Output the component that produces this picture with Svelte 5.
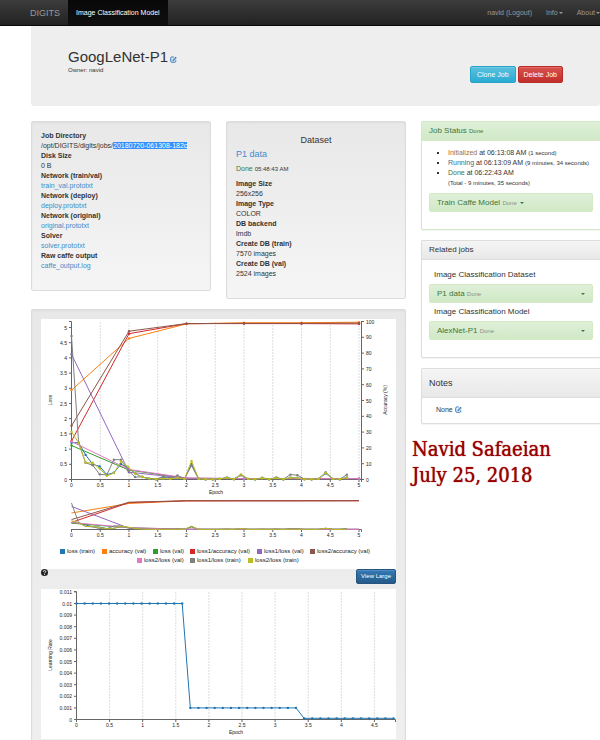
<script>
  const colors = {
    blue: '#1f77b4', orange: '#ff7f0e', green: '#2ca02c', red: '#d62728',
    purple: '#9467bd', brown: '#8c564b', pink: '#e377c2', gray: '#7f7f7f', olive: '#bcbd22'
  };

  const files = [
    ['Network (train/val)', 'train_val.prototxt'],
    ['Network (deploy)', 'deploy.prototxt'],
    ['Network (original)', 'original.prototxt'],
    ['Solver', 'solver.prototxt'],
    ['Raw caffe output', 'caffe_output.log']
  ];
  const dataset = [
    ['Image Size', '256x256'],
    ['Image Type', 'COLOR'],
    ['DB backend', 'lmdb'],
    ['Create DB (train)', '7570 images'],
    ['Create DB (val)', '2524 images']
  ];

  // Solver iterations are logged every STEP epochs, validation once an epoch.
  const STEP = 0.1228;
  const train = (values) => values.map((v, i) => [i * STEP, v]);
  const val = (values) => values.map((v, i) => [i, v]);
  const pct = (values) => val(values.map((v) => v * 0.0518));

  const series = [
    { color: colors.blue, points: train([1.21, 1.21, 0.81, 0.5, 0.43, 0.16, 0.22, 0.51, 0.38, 0.2, 0.08, 0.03, 0.01, 0.08, 0.06, 0.04, 0.03, 0.5, 0.03, 0.01, 0.01, 0.02, 0.06, 0.02, 0.15, 0.02, 0.01, 0.04, 0.01, 0.05, 0.01, 0.06, 0.05, 0.02, 0.01, 0.02, 0.2, 0.02, 0.01, 0.07]) },
    { color: colors.orange, points: pct([56.8, 89.6, 98.8, 99.6, 99.6, 99.9]) },
    { color: colors.green, points: val([1.12, 0.31, 0.04, 0.03, 0.03, 0.03]) },
    { color: colors.red, points: pct([24.4, 92.6, 99, 99, 99, 98.8]) },
    { color: colors.purple, points: val([4.12, 0.24, 0.04, 0.03, 0.03, 0.03]) },
    { color: colors.brown, points: pct([34.1, 94.2, 99, 99.1, 99.1, 99.3]) },
    { color: colors.pink, points: val([1.25, 0.33, 0.05, 0.03, 0.03, 0.03]) },
    { color: colors.gray, points: train([4.72, 1.21, 0.55, 0.47, 0.17, 0.15, 0.65, 0.65, 0.3, 0.08, 0.09, 0.03, 0.01, 0.1, 0.04, 0.13, 0.03, 0.46, 0.02, 0.01, 0.01, 0.02, 0.06, 0.01, 0.14, 0.02, 0.01, 0.06, 0.01, 0.07, 0.01, 0.16, 0.14, 0.01, 0.01, 0.02, 0.24, 0.02, 0.01, 0.16]) },
    { color: colors.olive, points: train([1.57, 1.21, 0.55, 0.55, 0.36, 0.12, 0.21, 0.59, 0.42, 0.2, 0.08, 0.03, 0.01, 0.03, 0.02, 0.05, 0.02, 0.61, 0.02, 0.01, 0.01, 0.02, 0.06, 0.01, 0.17, 0.02, 0.01, 0.04, 0.01, 0.05, 0.01, 0.06, 0.05, 0.01, 0.01, 0.02, 0.22, 0.02, 0.01, 0.06]) }
  ];

  const halves = [0, 0.5, 1, 1.5, 2, 2.5, 3, 3.5, 4, 4.5, 5];
  const percents = [0, 10, 20, 30, 40, 50, 60, 70, 80, 90, 100];
  const sx = (v) => 30.5 + v * 57.5;
  const sy = (v) => 160.5 - v * 30.4;
  const py = (v) => 160.5 - v * 1.58;
  const my = (v) => 210.5 - v * 5.6;
  const line = (points, fx, fy) => points.map(([x, y]) => `${fx(x).toFixed(1)},${fy(y).toFixed(1)}`).join(' ');

  const legend = [
    [19, 232, colors.blue, 'loss (train)'],
    [61, 232, colors.orange, 'accuracy (val)'],
    [112, 232, colors.green, 'loss (val)'],
    [149, 232, colors.red, 'loss1/accuracy (val)'],
    [216, 232, colors.purple, 'loss1/loss (val)'],
    [269, 232, colors.brown, 'loss2/accuracy (val)'],
    [96, 241, colors.pink, 'loss2/loss (val)'],
    [149, 241, colors.gray, 'loss1/loss (train)'],
    [207, 241, colors.olive, 'loss2/loss (train)']
  ];

  const rates = train(Array.from({ length: 40 }, (_, i) => (i < 14 ? 10 : i < 28 ? 1 : 0.1)));
  const rx = (v) => 35.5 + v * 66.2;
  const ry = (v) => 130.5 - v * 11.6;
  const rateTicks = Array.from({ length: 12 }, (_, i) => i);
</script>

{#snippet edit()}
  <svg class="edit" viewBox="0 0 14 14" aria-hidden="true">
    <path d="M7.500 2H3.500A2 2 0 0 0 1.500 4V10.500A2 2 0 0 0 3.500 12.500H9.500A2 2 0 0 0 11.500 10.500V8.500" fill="none" stroke="currentColor" stroke-width="2" />
    <path d="M5 10V7.500L11 1.500L13.500 4L7.500 10Z" fill="currentColor" />
    <path d="M7 8L11 4" stroke="#fff" stroke-width="1" />
  </svg>
{/snippet}

<nav>
  <div class="left">
    <a class="brand" href="#home">DIGITS</a>
    <a class="active" href="#model">Image Classification Model</a>
  </div>
  <div class="right">
    <a href="#logout">navid (Logout)</a>
    <a href="#info">Info<i class="caret"></i></a>
    <a href="#about">About<i class="caret"></i></a>
  </div>
</nav>

<main>
  <header>
    <div>
      <h1>GoogLeNet-P1<a href="#rename" aria-label="Edit name">{@render edit()}</a></h1>
      <p>Owner: navid</p>
    </div>
    <div class="actions">
      <button class="btn info">Clone Job</button>
      <button class="btn danger">Delete Job</button>
    </div>
  </header>

  <div class="columns">
    <div class="content">
      <div class="wells">
        <section class="well">
          <dl>
            <dt>Job Directory</dt>
            <dd>/opt/DIGITS/digits/jobs/<span class="selected">20180720-061308-182c</span></dd>
            <dt>Disk Size</dt>
            <dd>0 B</dd>
            {#each files as [name, file]}
              <dt>{name}</dt>
              <dd><a href="#{file}">{file}</a></dd>
            {/each}
          </dl>
        </section>
        <section class="well">
          <h2>Dataset</h2>
          <a class="name" href="#p1">P1 data</a>
          <p class="state"><span class="ok">Done</span> <small>05:48:43 AM</small></p>
          <dl>
            {#each dataset as [name, value]}
              <dt>{name}</dt>
              <dd>{value}</dd>
            {/each}
          </dl>
        </section>
      </div>

      <section class="well charts">
        <svg class="chart" viewBox="0 0 355 250" role="img" aria-label="Loss and accuracy by epoch">
          {#each halves as t}
            {#if t > 0}<line class="grid" x1={sx(t)} x2={sx(t)} y1="3" y2="160" />{/if}
            <line class="axis" x1={sx(t)} x2={sx(t)} y1="160" y2="163" />
            <text x={sx(t)} y="168" text-anchor="middle">{t}</text>
            <line class="axis" x1={sx(t)} x2={sx(t)} y1="210" y2="213" />
            <text x={sx(t)} y="218" text-anchor="middle">{t}</text>
            <line class="axis" x1="28" x2="30" y1={sy(t)} y2={sy(t)} />
            <text x="26" y={sy(t) + 2} text-anchor="end">{t}</text>
          {/each}
          {#each percents as t}
            <line class="axis" x1="320" x2="323" y1={py(t)} y2={py(t)} />
            <text x="325" y={py(t) + 2}>{t}</text>
          {/each}
          <path class="axis" d="M28 2.500H30.500V160.500H28M323 2.500H320.500V160.500H323M30.500 163V160.500H320.500V163M30.500 213V210.500H320.500V213" />
          <text x="175" y="175" text-anchor="middle">Epoch</text>
          <text transform="translate(11 81) rotate(-90)" text-anchor="middle">Loss</text>
          <text transform="translate(346 81) rotate(-90)" text-anchor="middle">Accuracy (%)</text>
          {#each series as s}
            <polyline points={line(s.points, sx, sy)} stroke={s.color} />
            {#each s.points as [x, y]}
              <circle cx={sx(x)} cy={sy(y)} r="1.200" fill={s.color} />
            {/each}
            <polyline points={line(s.points, sx, my)} stroke={s.color} />
          {/each}
          {#each legend as [x, y, color, label]}
            <rect {x} y={y - 2} width="5" height="5" fill={color} />
            <text class="key" x={x + 7} y={y + 2}>{label}</text>
          {/each}
        </svg>
        <div class="tools">
          <svg class="help" viewBox="0 0 14 14" aria-hidden="true">
            <circle cx="7" cy="7" r="7" fill="#222" />
            <path d="M4.600 5.500C4.600 2.200 9.500 2.200 9.500 5.200C9.500 7 7.200 7 7.200 8.700M7.200 9.900V11.700" fill="none" stroke="#fff" stroke-width="1.900" />
          </svg>
          <button class="btn primary">View Large</button>
        </div>
        <svg class="chart" viewBox="0 0 355 150" role="img" aria-label="Learning rate by epoch">
          {#each halves.slice(0, 10) as t}
            {#if t > 0}<line class="grid" x1={rx(t)} x2={rx(t)} y1="3" y2="130" />{/if}
            <line class="axis" x1={rx(t)} x2={rx(t)} y1="130" y2="133" />
            <text x={rx(t)} y="138" text-anchor="middle">{t}</text>
          {/each}
          {#each rateTicks as t}
            <line class="axis" x1="33" x2="35" y1={ry(t)} y2={ry(t)} />
            <text x="31" y={ry(t) + 2} text-anchor="end">{t / 1000}</text>
          {/each}
          <path class="axis" d="M33 2.500H35.500V130.500H33M35.500 133V130.500H354.500V133" />
          <text x="195" y="145" text-anchor="middle">Epoch</text>
          <text transform="translate(11 66) rotate(-90)" text-anchor="middle">Learning Rate</text>
          <polyline points={line(rates, rx, ry)} stroke={colors.blue} />
          {#each rates as [x, y]}
            <circle cx={rx(x)} cy={ry(y)} r="1.200" fill={colors.blue} />
          {/each}
        </svg>
      </section>
    </div>

    <aside>
      <section class="panel success">
        <h3>Job Status <small>Done</small></h3>
        <div class="body">
          <ul>
            <li><span class="warn">Initialized</span> at 06:13:08 AM <small>(1 second)</small></li>
            <li><span class="run">Running</span> at 06:13:09 AM <small>(9 minutes, 34 seconds)</small></li>
            <li><span class="ok">Done</span> at 06:22:43 AM<br /><small>(Total - 9 minutes, 35 seconds)</small></li>
          </ul>
          <button class="drop">Train Caffe Model <small>Done</small> <i class="caret"></i></button>
        </div>
      </section>
      <section class="panel">
        <h3>Related jobs</h3>
        <div class="body related">
          <h4>Image Classification Dataset</h4>
          <button class="drop wide"><span>P1 data <small>Done</small></span><i class="caret"></i></button>
          <h4>Image Classification Model</h4>
          <button class="drop wide"><span>AlexNet-P1 <small>Done</small></span><i class="caret"></i></button>
        </div>
      </section>
      <section class="panel">
        <h3 class="tall">Notes</h3>
        <p class="note">None <a href="#notes" aria-label="Edit notes">{@render edit()}</a></p>
      </section>
      <p class="signature">Navid Safaeian<br />July 25, 2018</p>
    </aside>
  </div>
</main>

<style>
  :global(body) {
    background: #fff;
    overflow-x: hidden;
  }
  :global(#app) {
    font: 7px/10px "Liberation Sans", Arial, sans-serif;
    color: #333;
  }
  h1, h2, h3, h4, p, dl, dd, ul { margin: 0; padding: 0; font-weight: normal; }
  a { color: #428bca; text-decoration: none; }
  small { font-size: 6px; line-height: 6px; }
  button { font-family: inherit; cursor: pointer; }

  nav {
    display: flex;
    justify-content: space-between;
    height: 25px;
    padding-left: 22px;
    background: linear-gradient(#3c3c3c, #222);
    border-bottom: 1px solid #080808;
  }
  .left, .right { display: flex; }
  nav a { padding: 8px; line-height: 9px; color: #999; white-space: nowrap; }
  .right a { padding: 8px 7px; }
  .right a:last-child { padding-right: 0; }
  nav .brand { font-size: 9px; line-height: 10px; }
  nav .active { background: linear-gradient(#080808, #0f0f0f); color: #fff; }
  .caret {
    display: inline-block;
    margin-left: 1px;
    vertical-align: middle;
    border: 2px solid transparent;
    border-top-color: currentColor;
    border-bottom: 0;
  }

  main { margin-left: 31px; }
  header {
    display: flex;
    justify-content: space-between;
    padding: 22px 37px 23px;
    background: #eee;
    border-radius: 0 0 3px 3px;
  }
  h1 { font-size: 15px; line-height: 18px; }
  h1 .edit { margin-left: 2px; }
  header p { margin-bottom: 9px; font-size: 6px; line-height: 8px; }
  .edit { width: 7px; height: 7px; vertical-align: -1px; color: #337ab7; }
  .actions { display: flex; gap: 2px; align-items: flex-end; }
  .btn {
    padding: 0 5px;
    font-size: 7px;
    line-height: 15px;
    color: #fff;
    border: 1px solid;
    border-radius: 2px;
    box-shadow: inset 0 1px 0 rgba(255, 255, 255, 0.15);
    white-space: nowrap;
  }
  .info { background: linear-gradient(#5bc0de, #2aabd2); border-color: #28a4c9; padding: 0 6px; }
  .danger { background: linear-gradient(#d9534f, #c12e2a); border-color: #b92c28; }
  .primary {
    background: linear-gradient(#337ab7, #265a88);
    border-color: #245580;
    font-size: 6px;
    line-height: 13px;
    padding: 0 4px;
  }

  .columns {
    display: grid;
    grid-template-columns: minmax(0, 375fr) minmax(0, 179fr);
    gap: 15px;
    margin-top: 15px;
  }
  .wells {
    display: grid;
    grid-template-columns: 1fr 1fr;
    align-items: start;
    gap: 15px;
    margin-bottom: 10px;
  }
  .well {
    padding: 9px 9px 19px;
    border: 1px solid #dcdcdc;
    border-radius: 2px;
    background: linear-gradient(#e8e8e8, #f5f5f5);
    box-shadow: inset 0 1px 2px rgba(0, 0, 0, 0.05);
  }
  dt { font-weight: bold; }
  .selected { background: #3390ff; color: #fff; }
  h2 { margin-top: 3px; font-size: 9px; line-height: 12px; text-align: center; }
  .name { display: block; font-size: 9px; line-height: 16px; }
  .state { line-height: 10px; margin: 2px 0 5px; }
  .ok { color: #3c763d; }
  .warn { color: #a0703b; }
  .run { color: #31708f; }

  .charts {
    padding-bottom: 1px;
    border-bottom: 0;
    border-radius: 2px 2px 0 0;
    background: linear-gradient(#e8e8e8, #efefef);
  }
  .chart { display: block; width: 100%; background: #fff; }
  .chart text { font-size: 5px; fill: #222; }
  .chart .key { font-size: 6px; }
  .axis { fill: none; stroke: #666; }
  .grid { stroke: #ddd; stroke-dasharray: 2 1; }
  polyline { fill: none; stroke-width: 1; }
  .tools { display: flex; justify-content: space-between; align-items: flex-start; height: 20px; }
  .help { width: 7px; height: 7px; }

  .panel {
    margin-bottom: 10px;
    border: 1px solid #ddd;
    border-right: 0;
    border-radius: 2px 0 0 2px;
    box-shadow: 0 1px 1px rgba(0, 0, 0, 0.05);
  }
  h3 {
    padding-left: 7px;
    font-size: 8px;
    line-height: 18px;
    background: linear-gradient(#f5f5f5, #e8e8e8);
    border-bottom: 1px solid #ddd;
  }
  h3.tall { font-size: 9px; line-height: 28px; }
  .success { border-color: #d0e9c6; }
  .success h3 { color: #3c763d; background: linear-gradient(#dff0d8, #d0e9c6); border-color: #d6e9c6; }
  .body { padding: 7px 7px 17px; }
  .related { padding-top: 6px; }
  ul { padding-left: 19px; margin-bottom: 5px; list-style: square; white-space: nowrap; }
  .drop {
    display: block;
    width: 100%;
    padding: 0 7px;
    border: 1px solid #d6e9c6;
    border-radius: 2px;
    background: linear-gradient(#dff0d8, #d0e9c6);
    color: #3c763d;
    font-size: 8px;
    line-height: 17px;
    text-align: left;
  }
  .drop small { color: #777; opacity: 0.8; }
  .wide { display: flex; justify-content: space-between; align-items: center; }
  h4 { padding-left: 5px; font-size: 8px; line-height: 18px; }
  .note { padding: 7px 14px 8px; }
  .signature {
    margin: 12px 0 0 -9px;
    font: 20px/26px "DejaVu Serif Condensed", "DejaVu Serif", serif;
    color: #900;
    text-shadow: 0 0 1px #900;
    white-space: nowrap;
  }
</style>
